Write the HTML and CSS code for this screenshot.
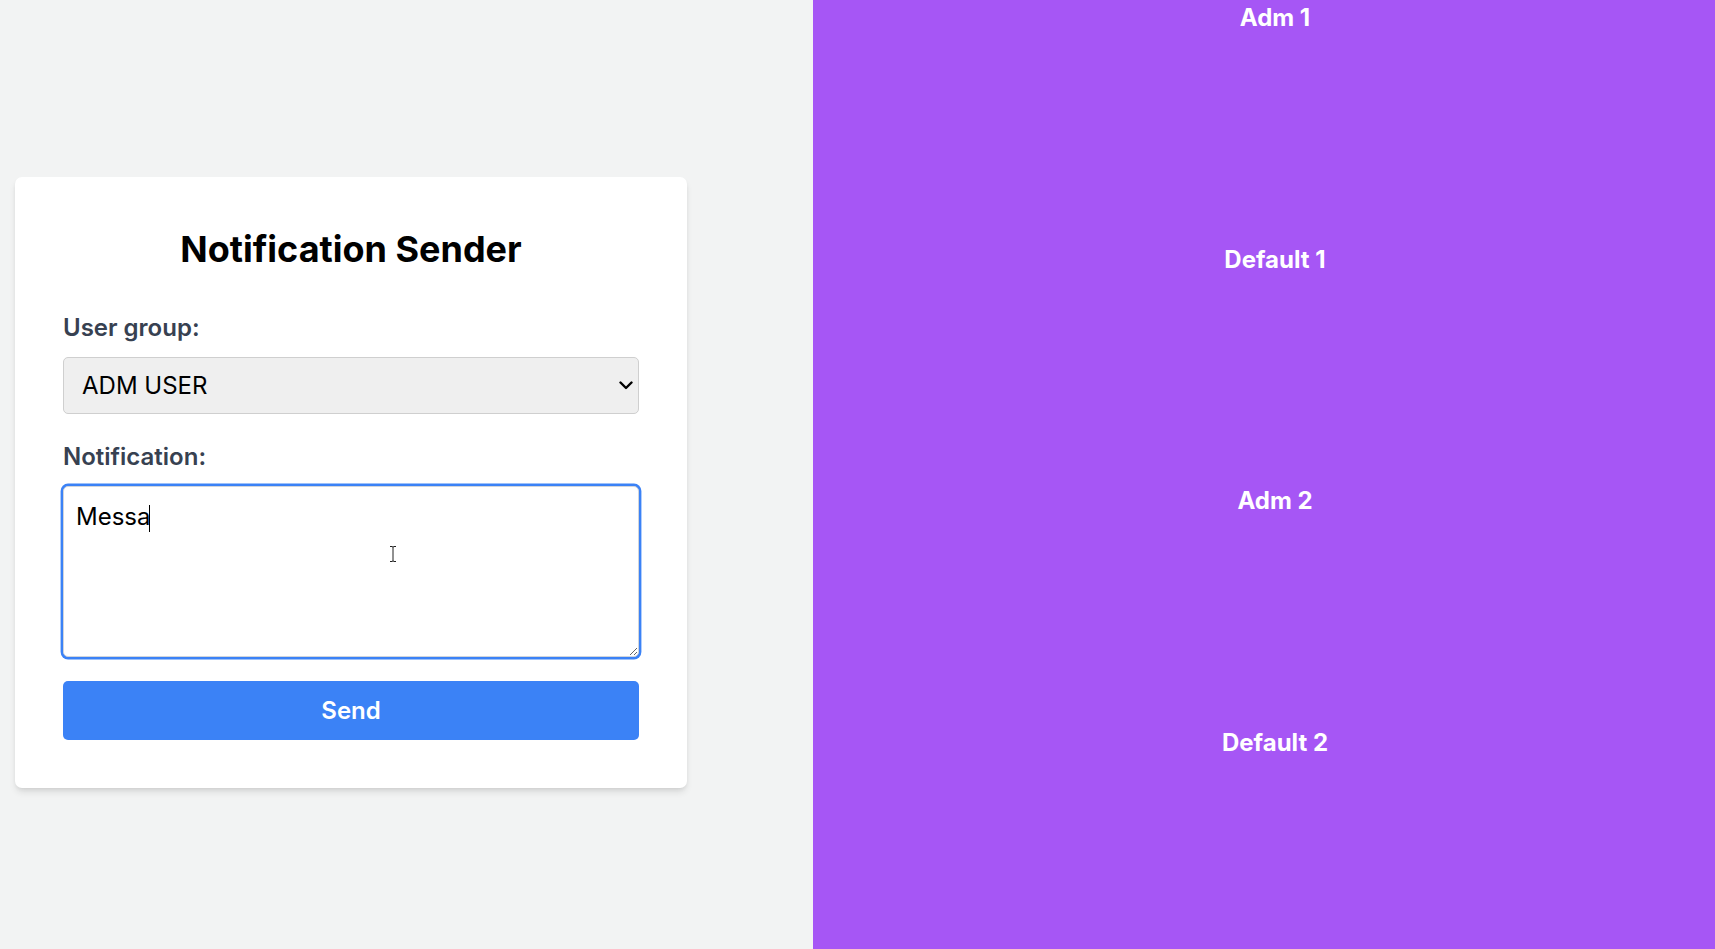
FILE: index.html
```html
<!DOCTYPE html>
<html lang="en">
<head>
<meta charset="utf-8">
<title>Notification Sender</title>
<link rel="stylesheet" href="styles.css">
</head>
<body>
  <div class="page">
    <main class="left">
      <section class="card">
        <h1 class="title">Notification Sender</h1>
        <div class="field">
          <label class="label" for="group">User group:</label>
          <div class="select-wrap">
            <select id="group" class="select">
              <option>ADM USER</option>
              <option>DEFAULT USER</option>
            </select>
            <svg class="chevron" width="14" height="9" viewBox="0 0 14 9" aria-hidden="true">
              <path d="M1.5 1.5 L7 7 L12.5 1.5" fill="none" stroke="#000" stroke-width="2.4" stroke-linecap="round" stroke-linejoin="round"/>
            </svg>
          </div>
        </div>
        <div class="field field-last">
          <label class="label" for="msg">Notification:</label>
          <div class="textarea-wrap">
            <textarea id="msg" class="textarea">Messa</textarea>
            <span class="caret" aria-hidden="true"></span>
            <svg class="ibeam" width="8" height="18" viewBox="0 0 8 18" aria-hidden="true">
              <path d="M1 1.5 H3 Q4 1.5 4 2.5 V15.5 Q4 16.5 3 16.5 H1 M7 1.5 H5 Q4 1.5 4 2.5 M4 15.5 Q4 16.5 5 16.5 H7" fill="none" stroke="#fff" stroke-width="2.2"/>
              <path d="M1 1.5 H3 Q4 1.5 4 2.5 V15.5 Q4 16.5 3 16.5 H1 M7 1.5 H5 Q4 1.5 4 2.5 M4 15.5 Q4 16.5 5 16.5 H7" fill="none" stroke="#222" stroke-width="1"/>
            </svg>
          </div>
        </div>
        <button class="button" type="button">Send</button>
      </section>
    </main>
    <aside class="right">
      <div class="slot"><span class="slot-label">Adm 1</span></div>
      <div class="slot"><span class="slot-label">Default 1</span></div>
      <div class="slot"><span class="slot-label">Adm 2</span></div>
      <div class="slot"><span class="slot-label">Default 2</span></div>
    </aside>
  </div>
</body>
</html>
```

FILE: styles.css
```css
* {
  box-sizing: border-box;
}

html,
body {
  margin: 0;
  padding: 0;
  height: 100%;
}

body {
  font-family: Inter, "Noto Sans", "Liberation Sans", sans-serif;
  background: #f3f4f6;
  overflow: hidden;
}

.page {
  display: flex;
  height: 949px;
}

.left {
  width: 813px;
  flex: 0 0 813px;
  padding: 177px 0 0 15px;
  background: #f2f3f3;
}

.card {
  width: 672px;
  padding: 48px 48px 48px;
  background: #ffffff;
  border-radius: 7px;
  box-shadow: 0 5px 7px -1px rgba(0, 0, 0, 0.1), 0 2px 5px -2px rgba(0, 0, 0, 0.1);
}

.title {
  margin: 0 0 37.5px;
  font-size: 36px;
  line-height: 48px;
  font-weight: 700;
  color: #000;
  text-align: center;
}

.field {
  margin-bottom: 25.5px;
}

.field-last {
  margin-bottom: 24px;
}

.label {
  display: block;
  margin-bottom: 12.5px;
  font-size: 24px;
  line-height: 34px;
  font-weight: 600;
  color: #374151;
}

.select-wrap {
  position: relative;
}

.select {
  display: block;
  width: 100%;
  height: 57px;
  margin: 0;
  padding: 0 40px 0 18px;
  font-family: inherit;
  font-size: 24px;
  color: #000;
  background: #efefef;
  border: 1px solid #cfcfcf;
  border-radius: 5px;
  appearance: none;
  -webkit-appearance: none;
  outline: none;
}

.chevron {
  position: absolute;
  right: 6px;
  top: 24px;
  pointer-events: none;
}

.textarea-wrap {
  position: relative;
}

.textarea {
  display: block;
  width: 100%;
  height: 171px;
  margin: 0;
  padding: 15px 12px 13px;
  font-family: inherit;
  font-size: 24px;
  line-height: 29px;
  color: #000;
  background: #fff;
  border: 1px solid #d1d5db;
  border-radius: 5px;
  box-shadow: 0 0 0 2.4px #3b82f6;
  outline: none;
  resize: vertical;
}

.caret {
  position: absolute;
  left: 86px;
  top: 19px;
  width: 1px;
  height: 27px;
  background: #000;
  pointer-events: none;
}

.ibeam {
  position: absolute;
  left: 326px;
  top: 59px;
  pointer-events: none;
}

.button {
  display: block;
  width: 100%;
  height: 59px;
  margin: 0;
  padding: 0;
  font-family: inherit;
  font-size: 24px;
  font-weight: 600;
  color: #fff;
  background: #3b82f6;
  border: none;
  border-radius: 5px;
  cursor: pointer;
}

.right {
  flex: 1 1 auto;
  background: #a656f5;
  padding: 1px 0 0 22px;
  overflow: hidden;
}

.slot {
  height: 241.7px;
  text-align: center;
}

.slot-label {
  display: block;
  font-size: 24px;
  line-height: 34px;
  font-weight: 700;
  color: #fff;
}
```
